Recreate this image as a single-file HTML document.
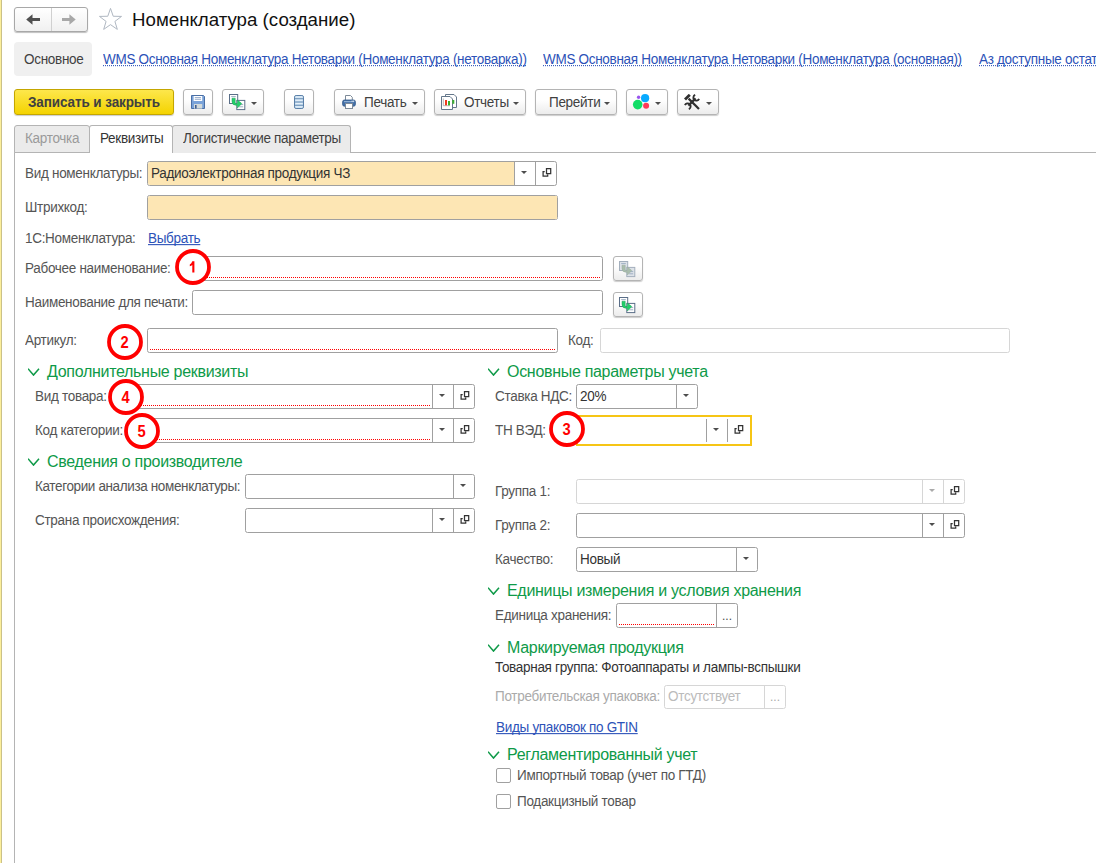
<!DOCTYPE html><html><head><meta charset="utf-8"><style>
html,body{margin:0;padding:0;background:#fff;width:1096px;height:863px;overflow:hidden;position:relative}
.t{position:absolute;font-family:"Liberation Sans",sans-serif;line-height:20px;white-space:nowrap}
.b{position:absolute;box-sizing:border-box}
a{color:inherit}
</style></head><body>
<div class="b" style="left:0;top:0;width:1px;height:863px;background:#fcef9b"></div>
<div class="b" style="left:1px;top:0;width:1px;height:863px;background:#cbc188"></div>
<div class="b" style="left:14px;top:7px;width:74px;height:25px;border:1px solid #a8a8a8;border-radius:3px;background:linear-gradient(#fff,#f0f0f0);box-shadow:0 1px 1px rgba(0,0,0,.25)"></div>
<div class="b" style="left:51px;top:8px;width:1px;height:23px;background:#d0d0d0"></div>
<svg class="b" style="left:25px;top:13px" width="16" height="13" viewBox="0 0 16 13"><path d="M1.2 6.5L7.5 1.2v3.8h7.5v3H7.5v3.8z" fill="#505050"/></svg>
<svg class="b" style="left:61px;top:13px" width="16" height="13" viewBox="0 0 16 13"><path d="M14.7 6.5L8.4 1.2v3.8H1v3h7.4v3.8z" fill="#a8a8a8"/></svg>
<svg class="b" style="left:98px;top:7px" width="25" height="24" viewBox="0 0 25 24"><path d="M12.50 1.40 L15.23 9.25 L23.53 9.42 L16.91 14.43 L19.32 22.38 L12.50 17.64 L5.68 22.38 L8.09 14.43 L1.47 9.42 L9.77 9.25z" fill="none" stroke="#b0b8c2" stroke-width="1"/></svg>
<div class="t" style="left:132px;top:10px;font-size:18.7px;letter-spacing:0px;color:#111;">Номенклатура (создание)</div>
<div class="b" style="left:14px;top:42px;width:78px;height:34px;background:#f0f0f0;border-radius:4px"></div>
<div class="t" style="left:24px;top:50px;font-size:13.5px;letter-spacing:-0.3px;color:#404040;transform:scaleY(1.08);transform-origin:0 14px;">Основное</div>
<div class="t" style="left:103px;top:50px;font-size:13.5px;letter-spacing:-0.3px;color:#2c52b8;transform:scaleY(1.08);transform-origin:0 14px;background:repeating-linear-gradient(90deg,#2c52b8 0 1px,transparent 1px 2px) 0 15px/100% 1px no-repeat">WMS Основная Номенклатура Нетоварки (Номенклатура (нетоварка))</div>
<div class="t" style="left:543px;top:50px;font-size:13.5px;letter-spacing:-0.3px;color:#2c52b8;transform:scaleY(1.08);transform-origin:0 14px;background:repeating-linear-gradient(90deg,#2c52b8 0 1px,transparent 1px 2px) 0 15px/100% 1px no-repeat">WMS Основная Номенклатура Нетоварки (Номенклатура (основная))</div>
<div class="t" style="left:979px;top:50px;font-size:13.5px;letter-spacing:-0.3px;color:#2c52b8;transform:scaleY(1.08);transform-origin:0 14px;background:repeating-linear-gradient(90deg,#2c52b8 0 1px,transparent 1px 2px) 0 15px/100% 1px no-repeat">Аз доступные остатки</div>
<div class="b" style="left:14px;top:89px;width:160px;height:26px;border:1px solid #c4a600;border-radius:3px;background:linear-gradient(#fde74c,#f4d300);box-shadow:0 1px 1px rgba(0,0,0,.2)"></div>
<div class="t" style="left:28px;top:93px;font-size:13.5px;letter-spacing:-0.1px;color:#404040;transform:scaleY(1.08);transform-origin:0 14px;font-weight:bold">Записать и закрыть</div>
<div class="b" style="left:183px;top:89px;width:30px;height:26px;border:1px solid #b4b4b4;border-radius:3px;background:linear-gradient(#fff 40%,#ececec);box-shadow:0 1px 1px rgba(0,0,0,.2)"></div>
<div class="b" style="left:222px;top:89px;width:42px;height:26px;border:1px solid #b4b4b4;border-radius:3px;background:linear-gradient(#fff 40%,#ececec);box-shadow:0 1px 1px rgba(0,0,0,.2)"></div>
<div class="b" style="left:284px;top:89px;width:30px;height:26px;border:1px solid #b4b4b4;border-radius:3px;background:linear-gradient(#fff 40%,#ececec);box-shadow:0 1px 1px rgba(0,0,0,.2)"></div>
<div class="b" style="left:334px;top:89px;width:91px;height:26px;border:1px solid #b4b4b4;border-radius:3px;background:linear-gradient(#fff 40%,#ececec);box-shadow:0 1px 1px rgba(0,0,0,.2)"></div>
<div class="b" style="left:434px;top:89px;width:92px;height:26px;border:1px solid #b4b4b4;border-radius:3px;background:linear-gradient(#fff 40%,#ececec);box-shadow:0 1px 1px rgba(0,0,0,.2)"></div>
<div class="b" style="left:535px;top:89px;width:82px;height:26px;border:1px solid #b4b4b4;border-radius:3px;background:linear-gradient(#fff 40%,#ececec);box-shadow:0 1px 1px rgba(0,0,0,.2)"></div>
<div class="b" style="left:626px;top:89px;width:42px;height:26px;border:1px solid #b4b4b4;border-radius:3px;background:linear-gradient(#fff 40%,#ececec);box-shadow:0 1px 1px rgba(0,0,0,.2)"></div>
<div class="b" style="left:677px;top:89px;width:42px;height:26px;border:1px solid #b4b4b4;border-radius:3px;background:linear-gradient(#fff 40%,#ececec);box-shadow:0 1px 1px rgba(0,0,0,.2)"></div>
<svg class="b" style="left:191px;top:95px" width="14" height="14" viewBox="0 0 14 14"><path d="M0.5 0.5h12l1 1v12h-13z" fill="#7aa3d9" stroke="#4a6fa5" stroke-width="1"/><rect x="2.6" y="1" width="8.6" height="5" fill="#fff"/><path d="M3.8 2.6h6.2M3.8 4.3h6.2" stroke="#8aa2c4" stroke-width="0.9"/><rect x="3" y="9" width="8.2" height="4.6" fill="#d3dada"/><rect x="4" y="10" width="1.6" height="3.6" fill="#3f5f93"/></svg>
<svg class="b" style="left:229px;top:94px" width="17" height="17" viewBox="0 0 17 17"><rect x="0.5" y="0.5" width="8.2" height="9" fill="#fff" stroke="#5a6e88"/><path d="M2.2 2.6h4.6" stroke="#9fb0c4"/><rect x="7.8" y="6.4" width="8" height="9.2" fill="#fff" stroke="#5a6e88"/><path d="M10.2 10.6h4M10.2 12.8h4" stroke="#9fb0c4"/><path d="M3 4.2h3.2v4.2q0 1 1 1h1.2V6l4.4 3.6-4.4 4.4v-2.8H6.9Q3 11.2 3 7.4z" fill="#22d06a" stroke="#1f9e58" stroke-width="0.5"/></svg>
<svg class="b" style="left:251px;top:102px" width="6" height="3" viewBox="0 0 6 3"><path d="M0 0h6L3 3z" fill="#4d4d4d"/></svg>
<svg class="b" style="left:294px;top:95px" width="10" height="14" viewBox="0 0 10 14"><rect x="0.5" y="0.5" width="9" height="13" rx="1.6" fill="#c3dbef" stroke="#5b80a8"/><path d="M0.8 3.7h8.4M0.8 7h8.4M0.8 10.3h8.4" stroke="#5b80a8" stroke-width="0.8"/><path d="M1.5 2h7M1.5 5.3h7M1.5 8.6h7M1.5 11.9h7" stroke="#eef6fc" stroke-width="0.9"/></svg>
<svg class="b" style="left:342px;top:95px" width="14" height="14" viewBox="0 0 14 14"><path d="M3.5 5V0.5h5l1.8 1.8V5" fill="#fff" stroke="#7d8a98"/><rect x="0.6" y="5" width="12.8" height="6.2" rx="1.8" fill="#4470a8" stroke="#335a8c" stroke-width="0.8"/><rect x="2" y="6" width="10" height="1.2" fill="#8fb0d4"/><rect x="9.6" y="5.6" width="1" height="1" fill="#fff"/><rect x="11.2" y="5.6" width="1" height="1" fill="#fff"/><rect x="3.5" y="8.5" width="7" height="5" fill="#fff" stroke="#7d8a98"/></svg>
<div class="t" style="left:364px;top:93px;font-size:13.5px;letter-spacing:-0.3px;color:#404040;transform:scaleY(1.08);transform-origin:0 14px;">Печать</div>
<svg class="b" style="left:412px;top:102px" width="6" height="3" viewBox="0 0 6 3"><path d="M0 0h6L3 3z" fill="#4d4d4d"/></svg>
<svg class="b" style="left:441px;top:94px" width="17" height="17" viewBox="0 0 17 17"><path d="M4.5 0.5h8.5l2.5 2.5v10.5h-11z" fill="#fff" stroke="#64778b"/><path d="M0.5 2.5h8.5l2.5 2.5v10.5h-11z" fill="#fff" stroke="#64778b"/><path d="M2.3 4.5v7.2h6.6" fill="none" stroke="#999" stroke-width="0.7"/><rect x="4" y="6" width="2" height="5.3" fill="#f03a20"/><rect x="7" y="7" width="2" height="4.3" fill="#3cb030"/><rect x="11.3" y="6" width="2" height="3.8" fill="#3cb030"/></svg>
<div class="t" style="left:464px;top:93px;font-size:13.5px;letter-spacing:-0.3px;color:#404040;transform:scaleY(1.08);transform-origin:0 14px;">Отчеты</div>
<svg class="b" style="left:513px;top:102px" width="6" height="3" viewBox="0 0 6 3"><path d="M0 0h6L3 3z" fill="#4d4d4d"/></svg>
<div class="t" style="left:549px;top:93px;font-size:13.5px;letter-spacing:-0.3px;color:#404040;transform:scaleY(1.08);transform-origin:0 14px;">Перейти</div>
<svg class="b" style="left:604px;top:102px" width="6" height="3" viewBox="0 0 6 3"><path d="M0 0h6L3 3z" fill="#4d4d4d"/></svg>
<svg class="b" style="left:630px;top:92px" width="22" height="20" viewBox="0 0 22 20"><circle cx="7.7" cy="12.6" r="4.8" fill="#11dd66"/><circle cx="15.1" cy="6.2" r="4.1" fill="#08aaff"/><circle cx="16.1" cy="13.7" r="3" fill="#ff3858"/><circle cx="8.6" cy="5.2" r="1.7" fill="#9a55ee"/></svg>
<svg class="b" style="left:655px;top:102px" width="6" height="3" viewBox="0 0 6 3"><path d="M0 0h6L3 3z" fill="#4d4d4d"/></svg>
<svg class="b" style="left:684px;top:94px" width="17" height="16" viewBox="0 0 17 16"><path d="M1 5.6L5.8 0.8" stroke="#303030" stroke-width="2.8" fill="none"/><path d="M4.6 4.6L15 15" stroke="#303030" stroke-width="2.2" fill="none"/><path d="M11.6 4.4L4.4 11.6" stroke="#303030" stroke-width="2.2" fill="none"/><path d="M11.2 0.9A3 3 0 1 0 15.1 4.8" stroke="#303030" stroke-width="1.8" fill="none"/><path d="M0.9 11.2A3 3 0 1 1 4.8 15.1" stroke="#303030" stroke-width="1.8" fill="none"/></svg>
<svg class="b" style="left:706px;top:102px" width="6" height="3" viewBox="0 0 6 3"><path d="M0 0h6L3 3z" fill="#4d4d4d"/></svg>
<div class="b" style="left:14px;top:152px;width:1082px;height:1px;background:#b4b4b4"></div>
<div class="b" style="left:14px;top:152px;width:1px;height:711px;background:#b4b4b4"></div>
<div class="b" style="left:14px;top:125px;width:76px;height:28px;border:1px solid #b4b4b4;border-radius:3px 3px 0 0;background:#ebebeb"></div>
<div class="b" style="left:89px;top:125px;width:84px;height:28px;border:1px solid #b4b4b4;border-bottom:none;border-radius:3px 3px 0 0;background:#fff"></div>
<div class="b" style="left:172px;top:125px;width:179px;height:28px;border:1px solid #b4b4b4;border-bottom:none;border-radius:3px 3px 0 0;background:#ebebeb"></div>
<div class="b" style="left:90px;top:152px;width:82px;height:1px;background:#fff"></div>
<div class="t" style="left:25px;top:129px;font-size:13.5px;letter-spacing:-0.3px;color:#9a9a9a;transform:scaleY(1.08);transform-origin:0 14px;">Карточка</div>
<div class="t" style="left:100px;top:129px;font-size:13.5px;letter-spacing:-0.3px;color:#333;transform:scaleY(1.08);transform-origin:0 14px;">Реквизиты</div>
<div class="t" style="left:183px;top:129px;font-size:13.5px;letter-spacing:-0.3px;color:#404040;transform:scaleY(1.08);transform-origin:0 14px;">Логистические параметры</div>
<div class="t" style="left:25px;top:164px;font-size:13.5px;letter-spacing:-0.3px;color:#555;transform:scaleY(1.08);transform-origin:0 14px;">Вид номенклатуры:</div>
<div class="b" style="left:147px;top:161px;width:410px;height:25px;border:1px solid #a0a0a0;background:#fff;border-radius:2.5px;"></div>
<div class="b" style="left:148px;top:162px;width:366px;height:23px;background:#fde6b4;border-radius:2px 0 0 2px"></div>
<div class="b" style="left:514px;top:162px;width:1px;height:23px;background:#a0a0a0"></div>
<div class="b" style="left:535px;top:162px;width:1px;height:23px;background:#a0a0a0"></div>
<div class="t" style="left:151px;top:164px;font-size:13.5px;letter-spacing:-0.3px;color:#333;transform:scaleY(1.08);transform-origin:0 14px;">Радиоэлектронная продукция ЧЗ</div>
<svg class="b" style="left:521px;top:171px" width="6" height="3" viewBox="0 0 6 3"><path d="M0 0h6L3 3z" fill="#4d4d4d"/></svg>
<svg class="b" style="left:542px;top:167px" width="11" height="11" viewBox="0 0 11 11"><path d="M4.5 1.5h4.2v5h-4.2z M2.7 4.6H1.1v4.6h4.6V7.6" fill="none" stroke="#333" stroke-width="1.25"/></svg>
<div class="t" style="left:25px;top:198px;font-size:13.5px;letter-spacing:-0.3px;color:#555;transform:scaleY(1.08);transform-origin:0 14px;">Штрихкод:</div>
<div class="b" style="left:147px;top:195px;width:411px;height:25px;border:1px solid #a0a0a0;background:#fff;border-radius:2.5px;"></div>
<div class="b" style="left:148px;top:196px;width:409px;height:23px;background:#fde6b4;border-radius:2px 0 0 2px"></div>
<div class="t" style="left:25px;top:229px;font-size:13.5px;letter-spacing:-0.3px;color:#555;transform:scaleY(1.08);transform-origin:0 14px;">1С:Номенклатура:</div>
<div class="t" style="left:148px;top:229px;font-size:13.5px;letter-spacing:-0.3px;color:#2c52b8;transform:scaleY(1.08);transform-origin:0 14px;text-decoration:underline;text-decoration-skip-ink:none">Выбрать</div>
<div class="t" style="left:25px;top:259px;font-size:13.5px;letter-spacing:-0.3px;color:#555;transform:scaleY(1.08);transform-origin:0 14px;">Рабочее наименование:</div>
<div class="b" style="left:186px;top:256px;width:417px;height:25px;border:1px solid #a0a0a0;background:#fff;border-radius:2.5px;"></div>
<div class="b" style="left:189px;top:277px;width:411px;height:1px;background:repeating-linear-gradient(90deg,#f00 0 1px,transparent 1px 2px)"></div>
<div class="b" style="left:613px;top:256px;width:30px;height:25px;border:1px solid #b4b4b4;border-radius:3px;background:linear-gradient(#fff 40%,#ececec);box-shadow:0 1px 1px rgba(0,0,0,.2)"></div>
<svg class="b" style="left:619px;top:261px" width="17" height="17" viewBox="0 0 17 17"><rect x="0.5" y="0.5" width="8.2" height="9" fill="#dde2e8" stroke="#a3afbd"/><path d="M2.2 2.6h4.6" stroke="#9fb0c4"/><rect x="7.8" y="6.4" width="8" height="9.2" fill="#dde2e8" stroke="#a3afbd"/><path d="M10.2 10.6h4M10.2 12.8h4" stroke="#9fb0c4"/><path d="M3 4.2h3.2v4.2q0 1 1 1h1.2V6l4.4 3.6-4.4 4.4v-2.8H6.9Q3 11.2 3 7.4z" fill="#a9bdad" stroke="#98aa9c" stroke-width="0.5"/></svg>
<div class="t" style="left:25px;top:293px;font-size:13.5px;letter-spacing:-0.3px;color:#555;transform:scaleY(1.08);transform-origin:0 14px;">Наименование для печати:</div>
<div class="b" style="left:192px;top:290px;width:411px;height:25px;border:1px solid #a0a0a0;background:#fff;border-radius:2.5px;"></div>
<div class="b" style="left:613px;top:292px;width:30px;height:25px;border:1px solid #b4b4b4;border-radius:3px;background:linear-gradient(#fff 40%,#ececec);box-shadow:0 1px 1px rgba(0,0,0,.2)"></div>
<svg class="b" style="left:619px;top:297px" width="17" height="17" viewBox="0 0 17 17"><rect x="0.5" y="0.5" width="8.2" height="9" fill="#fff" stroke="#5a6e88"/><path d="M2.2 2.6h4.6" stroke="#9fb0c4"/><rect x="7.8" y="6.4" width="8" height="9.2" fill="#fff" stroke="#5a6e88"/><path d="M10.2 10.6h4M10.2 12.8h4" stroke="#9fb0c4"/><path d="M3 4.2h3.2v4.2q0 1 1 1h1.2V6l4.4 3.6-4.4 4.4v-2.8H6.9Q3 11.2 3 7.4z" fill="#22d06a" stroke="#1f9e58" stroke-width="0.5"/></svg>
<div class="t" style="left:25px;top:331px;font-size:13.5px;letter-spacing:-0.3px;color:#555;transform:scaleY(1.08);transform-origin:0 14px;">Артикул:</div>
<div class="b" style="left:147px;top:328px;width:411px;height:25px;border:1px solid #a0a0a0;background:#fff;border-radius:2.5px;"></div>
<div class="b" style="left:150px;top:349px;width:405px;height:1px;background:repeating-linear-gradient(90deg,#f00 0 1px,transparent 1px 2px)"></div>
<div class="t" style="left:568px;top:331px;font-size:13.5px;letter-spacing:-0.3px;color:#555;transform:scaleY(1.08);transform-origin:0 14px;">Код:</div>
<div class="b" style="left:600px;top:328px;width:410px;height:25px;border:1px solid #d6d6d6;background:#fff;border-radius:2.5px;"></div>
<svg class="b" style="left:28px;top:367px" width="13" height="9" viewBox="0 0 13 9"><path d="M0 1.7l5.5 6.4 5.5-6.4" fill="none" stroke="#0e9a48" stroke-width="1.5"/></svg>
<div class="t" style="left:47px;top:362px;font-size:16px;letter-spacing:-0.3px;color:#0e9a48;">Дополнительные реквизиты</div>
<svg class="b" style="left:488px;top:367px" width="13" height="9" viewBox="0 0 13 9"><path d="M0 1.7l5.5 6.4 5.5-6.4" fill="none" stroke="#0e9a48" stroke-width="1.5"/></svg>
<div class="t" style="left:507px;top:362px;font-size:16px;letter-spacing:-0.3px;color:#0e9a48;">Основные параметры учета</div>
<div class="t" style="left:35px;top:387px;font-size:13.5px;letter-spacing:-0.3px;color:#555;transform:scaleY(1.08);transform-origin:0 14px;">Вид товара:</div>
<div class="b" style="left:122px;top:384px;width:353px;height:25px;border:1px solid #a0a0a0;background:#fff;border-radius:2.5px;"></div>
<div class="b" style="left:432px;top:385px;width:1px;height:23px;background:#a0a0a0"></div>
<div class="b" style="left:453px;top:385px;width:1px;height:23px;background:#a0a0a0"></div>
<div class="b" style="left:125px;top:405px;width:305px;height:1px;background:repeating-linear-gradient(90deg,#f00 0 1px,transparent 1px 2px)"></div>
<svg class="b" style="left:439px;top:394px" width="6" height="3" viewBox="0 0 6 3"><path d="M0 0h6L3 3z" fill="#4d4d4d"/></svg>
<svg class="b" style="left:460px;top:390px" width="11" height="11" viewBox="0 0 11 11"><path d="M4.5 1.5h4.2v5h-4.2z M2.7 4.6H1.1v4.6h4.6V7.6" fill="none" stroke="#333" stroke-width="1.25"/></svg>
<div class="t" style="left:35px;top:421px;font-size:13.5px;letter-spacing:-0.3px;color:#555;transform:scaleY(1.08);transform-origin:0 14px;">Код категории:</div>
<div class="b" style="left:136px;top:418px;width:339px;height:25px;border:1px solid #a0a0a0;background:#fff;border-radius:2.5px;"></div>
<div class="b" style="left:432px;top:419px;width:1px;height:23px;background:#a0a0a0"></div>
<div class="b" style="left:453px;top:419px;width:1px;height:23px;background:#a0a0a0"></div>
<div class="b" style="left:139px;top:439px;width:291px;height:1px;background:repeating-linear-gradient(90deg,#f00 0 1px,transparent 1px 2px)"></div>
<svg class="b" style="left:439px;top:428px" width="6" height="3" viewBox="0 0 6 3"><path d="M0 0h6L3 3z" fill="#4d4d4d"/></svg>
<svg class="b" style="left:460px;top:424px" width="11" height="11" viewBox="0 0 11 11"><path d="M4.5 1.5h4.2v5h-4.2z M2.7 4.6H1.1v4.6h4.6V7.6" fill="none" stroke="#333" stroke-width="1.25"/></svg>
<div class="t" style="left:495px;top:387px;font-size:13.5px;letter-spacing:-0.3px;color:#555;transform:scaleY(1.08);transform-origin:0 14px;">Ставка НДС:</div>
<div class="b" style="left:576px;top:384px;width:122px;height:25px;border:1px solid #a0a0a0;background:#fff;border-radius:2.5px;"></div>
<div class="b" style="left:676px;top:385px;width:1px;height:23px;background:#a0a0a0"></div>
<div class="t" style="left:580px;top:387px;font-size:13.5px;letter-spacing:-0.3px;color:#333;transform:scaleY(1.08);transform-origin:0 14px;">20%</div>
<svg class="b" style="left:683px;top:394px" width="6" height="3" viewBox="0 0 6 3"><path d="M0 0h6L3 3z" fill="#4d4d4d"/></svg>
<div class="t" style="left:495px;top:421px;font-size:13.5px;letter-spacing:-0.3px;color:#555;transform:scaleY(1.08);transform-origin:0 14px;">ТН ВЭД:</div>
<div class="b" style="left:576px;top:415px;width:176px;height:31px;border:2px solid #f6c515;background:#fff"></div>
<div class="b" style="left:706px;top:419px;width:1px;height:23px;background:#a0a0a0"></div>
<div class="b" style="left:727px;top:419px;width:1px;height:23px;background:#a0a0a0"></div>
<svg class="b" style="left:713px;top:428px" width="6" height="3" viewBox="0 0 6 3"><path d="M0 0h6L3 3z" fill="#4d4d4d"/></svg>
<svg class="b" style="left:734px;top:424px" width="11" height="11" viewBox="0 0 11 11"><path d="M4.5 1.5h4.2v5h-4.2z M2.7 4.6H1.1v4.6h4.6V7.6" fill="none" stroke="#333" stroke-width="1.25"/></svg>
<svg class="b" style="left:28px;top:457px" width="13" height="9" viewBox="0 0 13 9"><path d="M0 1.7l5.5 6.4 5.5-6.4" fill="none" stroke="#0e9a48" stroke-width="1.5"/></svg>
<div class="t" style="left:47px;top:452px;font-size:16px;letter-spacing:-0.3px;color:#0e9a48;">Сведения о производителе</div>
<div class="t" style="left:35px;top:477px;font-size:13.5px;letter-spacing:-0.37px;color:#555;transform:scaleY(1.08);transform-origin:0 14px;">Категории анализа номенклатуры:</div>
<div class="b" style="left:245px;top:474px;width:230px;height:25px;border:1px solid #a0a0a0;background:#fff;border-radius:2.5px;"></div>
<div class="b" style="left:453px;top:475px;width:1px;height:23px;background:#a0a0a0"></div>
<svg class="b" style="left:460px;top:484px" width="6" height="3" viewBox="0 0 6 3"><path d="M0 0h6L3 3z" fill="#4d4d4d"/></svg>
<div class="t" style="left:35px;top:511px;font-size:13.5px;letter-spacing:-0.3px;color:#555;transform:scaleY(1.08);transform-origin:0 14px;">Страна происхождения:</div>
<div class="b" style="left:245px;top:508px;width:230px;height:25px;border:1px solid #a0a0a0;background:#fff;border-radius:2.5px;"></div>
<div class="b" style="left:432px;top:509px;width:1px;height:23px;background:#a0a0a0"></div>
<div class="b" style="left:453px;top:509px;width:1px;height:23px;background:#a0a0a0"></div>
<svg class="b" style="left:439px;top:518px" width="6" height="3" viewBox="0 0 6 3"><path d="M0 0h6L3 3z" fill="#4d4d4d"/></svg>
<svg class="b" style="left:460px;top:514px" width="11" height="11" viewBox="0 0 11 11"><path d="M4.5 1.5h4.2v5h-4.2z M2.7 4.6H1.1v4.6h4.6V7.6" fill="none" stroke="#333" stroke-width="1.25"/></svg>
<div class="t" style="left:495px;top:482px;font-size:13.5px;letter-spacing:-0.3px;color:#555;transform:scaleY(1.08);transform-origin:0 14px;">Группа 1:</div>
<div class="b" style="left:576px;top:479px;width:389px;height:25px;border:1px solid #d6d6d6;background:#fff;border-radius:2.5px;"></div>
<div class="b" style="left:922px;top:480px;width:1px;height:23px;background:#d6d6d6"></div>
<div class="b" style="left:943px;top:480px;width:1px;height:23px;background:#d6d6d6"></div>
<svg class="b" style="left:929px;top:489px" width="6" height="3" viewBox="0 0 6 3"><path d="M0 0h6L3 3z" fill="#aaa"/></svg>
<svg class="b" style="left:950px;top:485px" width="11" height="11" viewBox="0 0 11 11"><path d="M4.5 1.5h4.2v5h-4.2z M2.7 4.6H1.1v4.6h4.6V7.6" fill="none" stroke="#333" stroke-width="1.25"/></svg>
<div class="t" style="left:495px;top:516px;font-size:13.5px;letter-spacing:-0.3px;color:#555;transform:scaleY(1.08);transform-origin:0 14px;">Группа 2:</div>
<div class="b" style="left:576px;top:513px;width:389px;height:25px;border:1px solid #a0a0a0;background:#fff;border-radius:2.5px;"></div>
<div class="b" style="left:922px;top:514px;width:1px;height:23px;background:#a0a0a0"></div>
<div class="b" style="left:943px;top:514px;width:1px;height:23px;background:#a0a0a0"></div>
<svg class="b" style="left:929px;top:523px" width="6" height="3" viewBox="0 0 6 3"><path d="M0 0h6L3 3z" fill="#4d4d4d"/></svg>
<svg class="b" style="left:950px;top:519px" width="11" height="11" viewBox="0 0 11 11"><path d="M4.5 1.5h4.2v5h-4.2z M2.7 4.6H1.1v4.6h4.6V7.6" fill="none" stroke="#333" stroke-width="1.25"/></svg>
<div class="t" style="left:495px;top:550px;font-size:13.5px;letter-spacing:-0.3px;color:#555;transform:scaleY(1.08);transform-origin:0 14px;">Качество:</div>
<div class="b" style="left:576px;top:547px;width:182px;height:25px;border:1px solid #a0a0a0;background:#fff;border-radius:2.5px;"></div>
<div class="b" style="left:736px;top:548px;width:1px;height:23px;background:#a0a0a0"></div>
<div class="t" style="left:580px;top:550px;font-size:13.5px;letter-spacing:-0.3px;color:#333;transform:scaleY(1.08);transform-origin:0 14px;">Новый</div>
<svg class="b" style="left:743px;top:557px" width="6" height="3" viewBox="0 0 6 3"><path d="M0 0h6L3 3z" fill="#4d4d4d"/></svg>
<svg class="b" style="left:488px;top:586px" width="13" height="9" viewBox="0 0 13 9"><path d="M0 1.7l5.5 6.4 5.5-6.4" fill="none" stroke="#0e9a48" stroke-width="1.5"/></svg>
<div class="t" style="left:507px;top:581px;font-size:16px;letter-spacing:-0.3px;color:#0e9a48;">Единицы измерения и условия хранения</div>
<div class="t" style="left:495px;top:606px;font-size:13.5px;letter-spacing:-0.3px;color:#555;transform:scaleY(1.08);transform-origin:0 14px;">Единица хранения:</div>
<div class="b" style="left:616px;top:603px;width:122px;height:25px;border:1px solid #a0a0a0;background:#fff;border-radius:2.5px;"></div>
<div class="b" style="left:716px;top:604px;width:1px;height:23px;background:#a0a0a0"></div>
<div class="b" style="left:619px;top:624px;width:95px;height:1px;background:repeating-linear-gradient(90deg,#f00 0 1px,transparent 1px 2px)"></div>
<div class="t" style="left:722px;top:606px;font-size:12px;letter-spacing:0px;color:#4d4d4d;">...</div>
<svg class="b" style="left:488px;top:643px" width="13" height="9" viewBox="0 0 13 9"><path d="M0 1.7l5.5 6.4 5.5-6.4" fill="none" stroke="#0e9a48" stroke-width="1.5"/></svg>
<div class="t" style="left:507px;top:638px;font-size:16px;letter-spacing:-0.3px;color:#0e9a48;">Маркируемая продукция</div>
<div class="t" style="left:495px;top:658px;font-size:13.5px;letter-spacing:-0.3px;color:#333;transform:scaleY(1.08);transform-origin:0 14px;">Товарная группа: Фотоаппараты и лампы-вспышки</div>
<div class="t" style="left:495px;top:687px;font-size:13.5px;letter-spacing:-0.3px;color:#aaaaaa;transform:scaleY(1.08);transform-origin:0 14px;">Потребительская упаковка:</div>
<div class="b" style="left:664px;top:685px;width:122px;height:24px;border:1px solid #d6d6d6;background:#fff;border-radius:2.5px;"></div>
<div class="b" style="left:764px;top:686px;width:1px;height:22px;background:#d6d6d6"></div>
<div class="t" style="left:668px;top:687px;font-size:13.5px;letter-spacing:-0.3px;color:#bbbbbb;transform:scaleY(1.08);transform-origin:0 14px;">Отсутствует</div>
<div class="t" style="left:770px;top:687px;font-size:12px;letter-spacing:0px;color:#aaaaaa;">...</div>
<div class="t" style="left:496px;top:718px;font-size:13.5px;letter-spacing:-0.3px;color:#2c52b8;transform:scaleY(1.08);transform-origin:0 14px;text-decoration:underline;text-decoration-skip-ink:none">Виды упаковок по GTIN</div>
<svg class="b" style="left:488px;top:750px" width="13" height="9" viewBox="0 0 13 9"><path d="M0 1.7l5.5 6.4 5.5-6.4" fill="none" stroke="#0e9a48" stroke-width="1.5"/></svg>
<div class="t" style="left:507px;top:745px;font-size:16px;letter-spacing:-0.3px;color:#0e9a48;">Регламентированный учет</div>
<div class="b" style="left:496px;top:768px;width:15px;height:15px;border:1px solid #a0a0a0;border-radius:2px;background:#fff"></div>
<div class="t" style="left:517px;top:766px;font-size:13.5px;letter-spacing:-0.3px;color:#555;transform:scaleY(1.08);transform-origin:0 14px;">Импортный товар (учет по ГТД)</div>
<div class="b" style="left:496px;top:794px;width:15px;height:15px;border:1px solid #a0a0a0;border-radius:2px;background:#fff"></div>
<div class="t" style="left:517px;top:792px;font-size:13.5px;letter-spacing:-0.3px;color:#555;transform:scaleY(1.08);transform-origin:0 14px;">Подакцизный товар</div>
<svg class="b" style="left:174px;top:248px" width="38" height="38" viewBox="0 0 38 38"><circle cx="19" cy="19" r="16" fill="#fff" stroke="#ff0000" stroke-width="3.8"/><path d="M18.3 13.3h2.1v11.1h-2.1V16.9q-1 .9-2.5 1.4v-1.9q1.8-.7 2.5-3.1z" fill="#ff0000"/></svg>
<svg class="b" style="left:106px;top:323px" width="38" height="38" viewBox="0 0 38 38"><circle cx="19" cy="19" r="16" fill="#fff" stroke="#ff0000" stroke-width="3.8"/><text x="18.6" y="24.6" text-anchor="middle" font-family="Liberation Sans" font-weight="bold" font-size="16" fill="#ff0000" transform="translate(18.6 0) scale(0.92 1) translate(-18.6 0)">2</text></svg>
<svg class="b" style="left:548px;top:410px" width="38" height="38" viewBox="0 0 38 38"><circle cx="19" cy="19" r="16" fill="#fff" stroke="#ff0000" stroke-width="3.8"/><text x="18.6" y="24.6" text-anchor="middle" font-family="Liberation Sans" font-weight="bold" font-size="16" fill="#ff0000" transform="translate(18.6 0) scale(0.92 1) translate(-18.6 0)">3</text></svg>
<svg class="b" style="left:107px;top:378px" width="38" height="38" viewBox="0 0 38 38"><circle cx="19" cy="19" r="16" fill="#fff" stroke="#ff0000" stroke-width="3.8"/><text x="18.6" y="24.6" text-anchor="middle" font-family="Liberation Sans" font-weight="bold" font-size="16" fill="#ff0000" transform="translate(18.6 0) scale(0.92 1) translate(-18.6 0)">4</text></svg>
<svg class="b" style="left:123px;top:412px" width="38" height="38" viewBox="0 0 38 38"><circle cx="19" cy="19" r="16" fill="#fff" stroke="#ff0000" stroke-width="3.8"/><text x="18.6" y="24.6" text-anchor="middle" font-family="Liberation Sans" font-weight="bold" font-size="16" fill="#ff0000" transform="translate(18.6 0) scale(0.92 1) translate(-18.6 0)">5</text></svg>
</body></html>
